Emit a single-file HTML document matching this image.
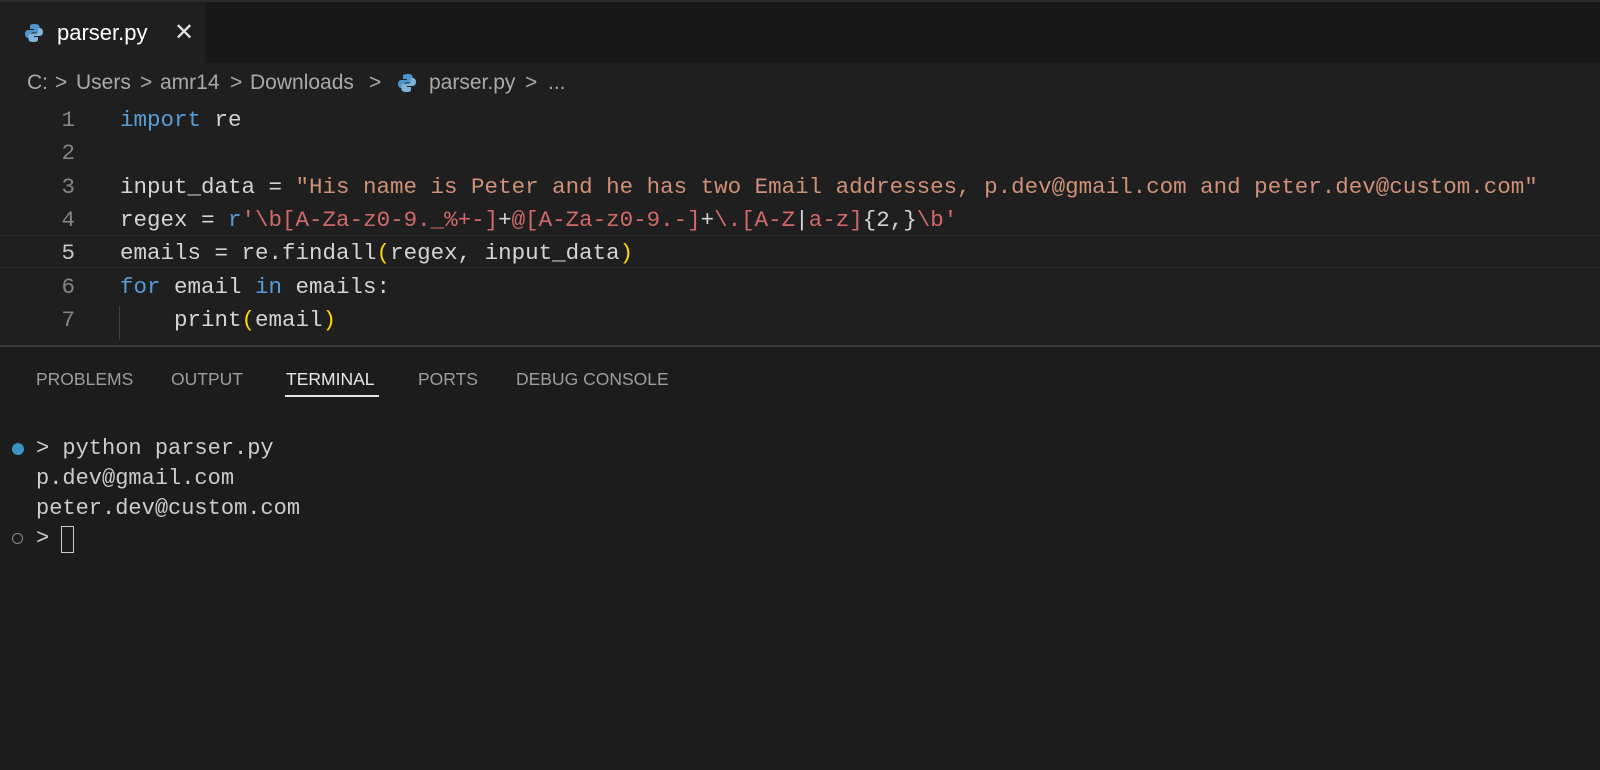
<!DOCTYPE html>
<html><head><meta charset="utf-8"><style>
body{margin:0;width:1600px;height:768px;background:#1f1f1f;overflow:hidden;position:relative;font-family:"Liberation Sans",sans-serif;}
.abs{position:absolute;white-space:pre}
.mono{font-family:"Liberation Mono",monospace;}
.tabbar{position:absolute;left:0;top:0;width:1600px;height:63px;background:#181818;border-top:2px solid #2b2b2b;box-sizing:border-box}
.tab{position:absolute;left:0;top:0;width:206px;height:63px;background:#1f1f1f}
.code{font-size:22.5px;color:#d4d4d4}
.ln{color:#858585;font-size:22.5px;width:75px;text-align:right}
.kw{color:#569cd6}.str{color:#ce9178}.re{color:#d16969}.br{color:#ffd700}
.pt{font-size:17.5px;color:#9d9d9d;top:369px}
.term{font-size:22px;color:#cccccc}
.bc{font-size:21px;color:#a9a9a9;top:71px}
</style></head><body>
<div class="tabbar"><div class="tab"></div></div>
<svg class="abs" style="left:24px;top:23px" width="20" height="20" viewBox="0 0 20 20"><path d="M9.8 1C6 1 6 2.6 6 3.5V6h4v1H4.4C2.5 7 1 8.5 1 11s1.4 4 3.2 4H6v-2.6C6 10.6 7.4 9.5 9 9.5h3.8c1.5 0 2.7-1.2 2.7-2.6V3.5C15.5 2 14 1 9.8 1z" fill="#4e94ce"/><path d="M10.2 19c3.8 0 3.8-1.6 3.8-2.5V14h-4v-1h5.6c1.9 0 3.4-1.5 3.4-4s-1.4-4-3.2-4H14v2.6c0 1.8-1.4 2.9-3 2.9H7.2c-1.5 0-2.7 1.2-2.7 2.6v3.4C4.5 18 6 19 10.2 19z" fill="#7fb3da"/></svg>
<div class="abs" style="left:57px;top:20px;font-size:22px;color:#ffffff">parser.py</div>
<div class="abs" style="left:174px;top:18px;font-size:24px;color:#e0e0e0">✕</div>
<div class="abs bc" style="left:27px">C:</div>
<div class="abs bc" style="left:55px">&gt;</div>
<div class="abs bc" style="left:76px">Users</div>
<div class="abs bc" style="left:140px">&gt;</div>
<div class="abs bc" style="left:160px">amr14</div>
<div class="abs bc" style="left:230px">&gt;</div>
<div class="abs bc" style="left:250px">Downloads</div>
<div class="abs bc" style="left:369px">&gt;</div>
<svg class="abs" style="left:397px;top:73px" width="20" height="20" viewBox="0 0 20 20"><path d="M9.8 1C6 1 6 2.6 6 3.5V6h4v1H4.4C2.5 7 1 8.5 1 11s1.4 4 3.2 4H6v-2.6C6 10.6 7.4 9.5 9 9.5h3.8c1.5 0 2.7-1.2 2.7-2.6V3.5C15.5 2 14 1 9.8 1z" fill="#4e94ce"/><path d="M10.2 19c3.8 0 3.8-1.6 3.8-2.5V14h-4v-1h5.6c1.9 0 3.4-1.5 3.4-4s-1.4-4-3.2-4H14v2.6c0 1.8-1.4 2.9-3 2.9H7.2c-1.5 0-2.7 1.2-2.7 2.6v3.4C4.5 18 6 19 10.2 19z" fill="#7fb3da"/></svg>
<div class="abs bc" style="left:429px">parser.py</div>
<div class="abs bc" style="left:525px">&gt;</div>
<div class="abs bc" style="left:548px">...</div>
<div class="abs" style="left:0;top:235px;width:1600px;height:31px;border-top:1px solid #2c2c2c;border-bottom:1px solid #2c2c2c"></div>
<div class="abs" style="left:119px;top:306px;width:1px;height:34px;background:#404040"></div>
<div class="abs mono ln" style="left:0;top:107px">1</div>
<div class="abs mono ln" style="left:0;top:140px">2</div>
<div class="abs mono ln" style="left:0;top:174px">3</div>
<div class="abs mono ln" style="left:0;top:207px">4</div>
<div class="abs mono ln" style="left:0;top:240px;color:#c6c6c6">5</div>
<div class="abs mono ln" style="left:0;top:274px">6</div>
<div class="abs mono ln" style="left:0;top:307px">7</div>
<div class="abs mono code" style="left:120px;top:107px"><span class="kw">import</span> re</div>
<div class="abs mono code" style="left:120px;top:174px">input_data = <span class="str">"His name is Peter and he has two Email addresses, p.dev@gmail.com and peter.dev@custom.com"</span></div>
<div class="abs mono code" style="left:120px;top:207px">regex = <span class="kw">r</span><span class="re">'\b[A-Za-z0-9._%+-]</span>+<span class="re">@[A-Za-z0-9.-]</span>+<span class="re">\.[A-Z</span>|<span class="re">a-z]</span>{2,}<span class="re">\b'</span></div>
<div class="abs mono code" style="left:120px;top:240px">emails = re.findall<span class="br">(</span>regex, input_data<span class="br">)</span></div>
<div class="abs mono code" style="left:120px;top:274px"><span class="kw">for</span> email <span class="kw">in</span> emails:</div>
<div class="abs mono code" style="left:120px;top:307px">    print<span class="br">(</span>email<span class="br">)</span></div>
<div class="abs" style="left:0;top:345px;width:1600px;height:423px;background:#1c1c1c;border-top:2px solid #3a3a3a"></div>
<div class="abs pt" style="left:36px">PROBLEMS</div>
<div class="abs pt" style="left:171px">OUTPUT</div>
<div class="abs pt" style="left:286px;color:#e7e7e7">TERMINAL</div>
<div class="abs" style="left:285px;top:395px;width:94px;height:2px;background:#e7e7e7"></div>
<div class="abs pt" style="left:418px">PORTS</div>
<div class="abs pt" style="left:516px">DEBUG CONSOLE</div>
<div class="abs" style="left:12px;top:443px;width:12px;height:12px;border-radius:50%;background:#3794c4"></div>
<div class="abs mono term" style="left:36px;top:436px">&gt; python parser.py</div>
<div class="abs mono term" style="left:36px;top:466px">p.dev@gmail.com</div>
<div class="abs mono term" style="left:36px;top:496px">peter.dev@custom.com</div>
<div class="abs" style="left:12px;top:533px;width:9px;height:9px;border-radius:50%;border:1.5px solid #8a8a8a"></div>
<div class="abs mono term" style="left:36px;top:526px">&gt;</div>
<div class="abs" style="left:61px;top:526px;width:11px;height:25px;border:1.5px solid #cccccc"></div>
</body></html>
